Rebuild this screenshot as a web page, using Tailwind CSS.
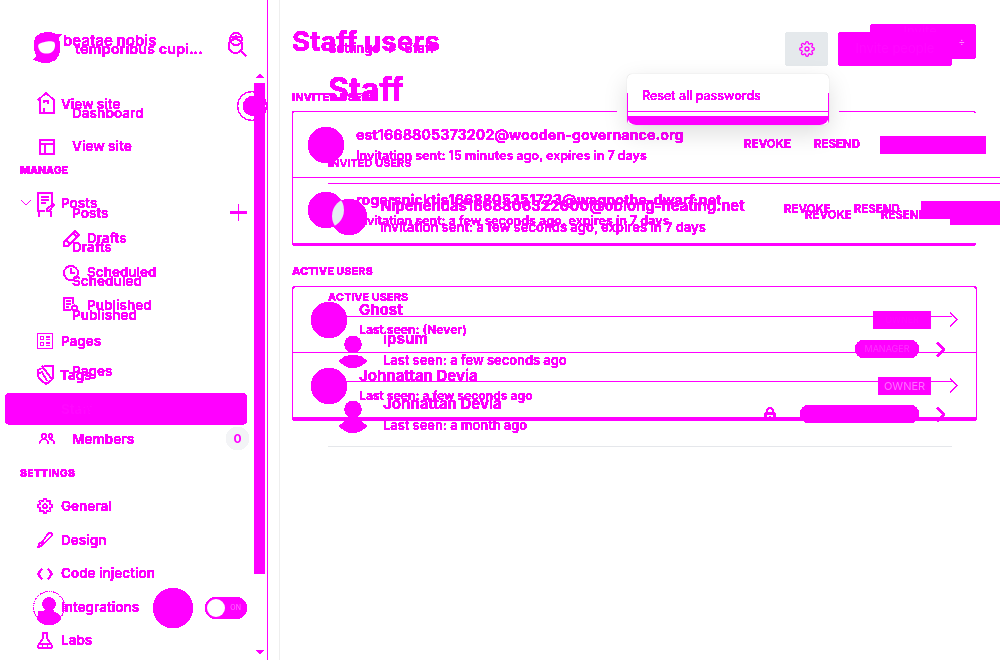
<!doctype html>
<html><head><meta charset="utf-8"><title>Staff users</title>
<script src="https://cdn.jsdelivr.net/npm/@tailwindcss/browser@4"></script></head>
<body class="bg-white font-['Inter',sans-serif] text-[#ff00ff]">
<svg class="absolute w-0 h-0" aria-hidden="true"><defs>
<filter id="t" color-interpolation-filters="sRGB" x="0" y="0" width="100%" height="100%"><feComponentTransfer><feFuncA type="discrete" tableValues="0 1 1 1 1 1"/></feComponentTransfer></filter>
<clipPath id="lens"><circle cx="350" cy="216" r="18"/></clipPath>
</defs></svg>
<div class="relative w-[1000px] h-[660px] overflow-hidden grid">

<!-- layer A -->
<div class="col-start-1 row-start-1 flex h-[660px] w-[1000px] overflow-hidden [filter:url(#t)]">
  <aside class="relative w-[268px] shrink-0 border-r border-[#ff00ff] text-[13.500px] font-semibold">
    <div class="h-[87px] pt-[32px] pl-[32px] flex items-start">
      <svg width="31" height="32" viewBox="0 0 31 32" class="shrink-0"><path fill="#ff00ff" d="M4 5C7 1 13 0 18 .5c4 .5 7 3 12 2l-4 3c1 2 2 5 2 9 0 6-2 12-6 14-4 2-8 3-12 2-3-1-6-2-9-3l4-3C3 21 2 17 2 13c0-3 1-6 2-8z"/><path fill="#fff" d="M7 12c3-2 12-4 15-2 2 2 1 8-2 10-3 2-8 2-11 0-2-2-4-6-2-8z"/></svg>
      <span class="leading-[18px] text-[15px] font-semibold">beatae nobis</span>
    </div>
    <a class="flex items-center h-[34px] pl-[37px]"><svg width="18" height="22" viewBox="0 0 18 22" fill="none" stroke="#ff00ff" stroke-width="1.300" class="mt-[-2px]"><path d="M1 8 9 1l8 7M3 7v14h14V7M7 21v-5"/><path d="M7 11v-2h4v3"/></svg><span class="ml-[6px]">View site</span></a>
    <a class="flex items-center h-[34px] pl-[21px] mt-[65px]">
      <svg width="10" height="6" viewBox="0 0 10 6" fill="none" stroke="#ff00ff" stroke-width="1"><path d="M.5.5 5 5 9.500.5"/></svg>
      <svg width="18" height="26" viewBox="0 0 18 26" fill="none" stroke="#ff00ff" stroke-width="1.300" class="ml-[6px] mt-[4px]"><path d="M15 12V1H1v18h7M4 5h8M4 8h8M4 11h5M2 19v6M14 19v6"/><path d="m10 17 6-5 1 1-5 6h-2z"/></svg>
      <span class="ml-[6px]">Posts</span></a>
    <a class="flex items-center h-[34px] pl-[63px] mt-px"><svg width="17" height="17" viewBox="0 0 17 17" fill="none" stroke="#ff00ff" stroke-width="1.300"><path d="M1 16v-4L12 1l4 4L5 16zM3 10l4 4M10 3l4 4"/></svg><span class="ml-[7px]">Drafts</span></a>
    <a class="flex items-center h-[33px] pl-[63px] mt-px"><svg width="16" height="16" viewBox="0 0 16 16" fill="none" stroke="#ff00ff" stroke-width="1.300"><circle cx="8" cy="8" r="7"/><path d="M8 3.500V8h4"/></svg><span class="ml-[8px]">Scheduled</span></a>
    <a class="flex items-center h-[34px] pl-[63px] mt-[-1px]"><svg width="17" height="16" viewBox="0 0 17 16" fill="none" stroke="#ff00ff" stroke-width="1.300"><path d="M8 13H1V1h9v6M3 4h5M3 7h5M3 10h3"/><circle cx="11.500" cy="11" r="2.500"/><path d="m13 13 3 2"/></svg><span class="ml-[7px]">Published</span></a>
    <a class="flex items-center h-[34px] pl-[37px] mt-[2px]"><svg width="16" height="16" viewBox="0 0 16 16" fill="none" stroke="#ff00ff" stroke-width="1"><rect x=".5" y=".5" width="15" height="15"/><path d="M3.500 3.500h3v3h-3zM3.500 9.500h3v3h-3zM9 4h4M9 6.500h4M9 10h4M9 12.500h4"/></svg><span class="ml-[8px]">Pages</span></a>
    <a class="flex items-center h-[34px] pl-[37px]"><svg width="17" height="20" viewBox="0 0 17 20" fill="none" stroke="#ff00ff" stroke-width="1.300"><path d="M1 5 8 1h8v11c0 3-4 5-7 7-3-2-8-5-8-9zM5 1l9 12M1 9l4-2 5 9"/></svg><span class="ml-[6px]">Tags</span></a>
    <a class="flex items-center h-[32px] w-[242px] ml-[5px] mt-px pl-[56px] rounded-[5px] bg-[#ff00ff] text-[#ff08ff]">Staff</a>
    <div class="h-[32px] mt-[32px] pt-[2px] pl-[20px] flex items-center text-[10.500px] font-extrabold tracking-[0.2px]">SETTINGS</div>
    <a class="flex items-center h-[34px] pl-[37px]"><svg width="16" height="16" viewBox="0 0 24 24" fill="none" stroke="#ff00ff" stroke-width="1.800"><circle cx="12" cy="12" r="3"/><path d="M19.400 15a1.650 1.650 0 00.33 1.820l.06.06a2 2 0 11-2.830 2.830l-.06-.06a1.650 1.650 0 00-1.820-.33 1.650 1.650 0 00-1 1.510V21a2 2 0 11-4 0v-.09A1.650 1.650 0 009 19.400a1.650 1.650 0 00-1.820.33l-.06.06a2 2 0 11-2.830-2.830l.06-.06A1.650 1.650 0 004.680 15a1.650 1.650 0 00-1.510-1H3a2 2 0 110-4h.09A1.650 1.650 0 004.600 9a1.650 1.650 0 00-.33-1.820l-.06-.06a2 2 0 112.830-2.830l.06.06A1.650 1.650 0 009 4.680a1.650 1.650 0 001-1.510V3a2 2 0 114 0v.09a1.650 1.650 0 001 1.510 1.650 1.650 0 001.820-.33l.06-.06a2 2 0 112.830 2.830l-.06.06A1.650 1.650 0 0019.400 9a1.650 1.650 0 001.510 1H21a2 2 0 110 4h-.09a1.650 1.650 0 00-1.510 1z"/></svg><span class="ml-[8px]">General</span></a>
    <a class="flex items-center h-[34px] pl-[37px]"><svg width="16" height="16" viewBox="0 0 16 16" fill="none" stroke="#ff00ff" stroke-width="1.300"><path d="M1 15c2 0 4-1 4-3l-1.500-1.500C2 11 2 13 1 15zM5 10.500l1.500 1.500 8-8c1-1 1-2 0-3s-2-1-3 0z"/></svg><span class="ml-[8px]">Design</span></a>
    <a class="flex items-center h-[33px] pl-[37px]"><svg width="16" height="12" viewBox="0 0 16 12" fill="none" stroke="#ff00ff" stroke-width="1.800"><path d="M5 1 1 6l4 5M11 1l4 5-4 5"/></svg><span class="ml-[8px]">Code injection</span></a>
    <a class="flex items-center h-[34px] pl-[37px]"><span class="w-[16px]"></span><span class="ml-[8px]">Integrations</span></a>
    <a class="flex items-center h-[33px] pl-[37px]"><svg width="16" height="17" viewBox="0 0 16 17" fill="none" stroke="#ff00ff" stroke-width="1.300"><path d="M5 1h6M6 1v5L1 14c-.5 1 0 2 1 2h12c1 0 1.500-1 1-2l-5-8V1M3 12h10M5 14h1M10 14h1"/></svg><span class="ml-[8px]">Labs</span></a>
    <!-- scrollbar -->
    <span class="absolute left-[254px] top-[83px] w-[11px] h-[491px] bg-[#ff00ff]"></span>
    <span class="absolute left-[256px] top-[74px] w-0 h-0 border-x-[4px] border-x-transparent border-b-[4px] border-b-[#ff00ff]"></span>
    <span class="absolute left-[256px] top-[650px] w-0 h-0 border-x-[4px] border-x-transparent border-t-[4px] border-t-[#ff00ff]"></span>
    <span class="absolute left-[237px] top-[91px] w-[30px] h-[30px] rounded-full border border-[#ff00ff]"></span>
    <span class="absolute left-[243px] top-[96px] w-[22px] h-[20px] rounded-full bg-[#ff00ff]"></span>
    <!-- avatar, filled button and toggle -->
    <span class="absolute left-[33px] top-[591px] w-[32px] h-[32px] rounded-full border border-dotted border-[#ff00ff]"></span>
    <svg class="absolute left-[34px] top-[595px]" width="30" height="30" viewBox="0 0 30 30"><circle cx="15" cy="9" r="6.500" fill="#ff00ff"/><path fill="#ff00ff" d="M11 14h8l1 3c4 1 7 4 7 7-3 4-7 6-12 6S6 28 3 24c0-3 3-6 7-7z"/><rect x="5" y="17" width="6" height="5" fill="none" stroke="#ff00ff"/></svg>
    <span class="absolute left-[153px] top-[588px] w-[40px] h-[40px] rounded-full bg-[#ff00ff]"></span>
    <span class="absolute left-[205px] top-[597px] w-[42px] h-[22px] rounded-full bg-[#ff00ff] text-right pr-[6px] text-[7px] leading-[22px] font-normal text-[#ff70ff]">ON</span>
    <span class="absolute left-[207px] top-[599px] w-[18px] h-[18px] rounded-full bg-white"></span>
  </aside>
  <main class="w-[708px] shrink-0 pl-[24px] pt-[24px]">
    <div class="flex justify-between w-[684px] h-[35px]">
      <h1 class="text-[27.700px] leading-[35px] font-bold">Staff users</h1>
      <button class="w-[106px] h-[35px] rounded-[3px] bg-[#ff00ff] text-[13px] text-[#ff08ff] flex items-center justify-between pl-[12px] pr-[11px]"><span>Invite people</span><span class="text-[#ffb0ff] text-[10px] mt-[-1px]">÷</span></button>
    </div>
    <h2 class="mt-[28px] h-[24px] text-[11px] leading-[20px] font-extrabold">INVITED USERS</h2>
    <section class="w-[684px] h-[135px] border-l border-t border-b-[3px] border-[#ff00ff] rounded-[3px]">
      <div class="flex items-center w-[693px] h-[65px] pl-[15px]">
        <span class="w-[36px] h-[36px] rounded-full bg-[#ff00ff] shrink-0"></span>
        <div class="ml-[12px]"><p class="text-[14.350px] leading-[21px] font-bold">est1668805373202@wooden-governance.org</p><p class="text-[12.500px] leading-[21px] font-semibold">Invitation sent: 15 minutes ago, expires in 7 days</p></div>
        <div class="ml-auto flex items-center gap-[23px] text-[11.500px] font-bold"><span>REVOKE</span><span>RESEND</span><span class="ml-[-3px] w-[106px] h-[18px] rounded-[2px] bg-[#ff00ff]"></span></div>
      </div>
      <div class="flex items-center w-[708px] h-[65px] pl-[15px] border-t border-[#ff00ff] overflow-hidden">
        <span class="w-[36px] h-[36px] rounded-full bg-[#ff00ff] shrink-0"></span>
        <div class="ml-[12px] w-[369px] shrink-0"><p class="text-[14.350px] leading-[21px] font-bold whitespace-nowrap">rogersnicktis1668805351723@wagnothe-dwarf.net</p><p class="text-[12.500px] leading-[21px] font-semibold whitespace-nowrap">Invitation sent: a few seconds ago, expires in 7 days</p></div>
        <div class="ml-[59px] flex items-center gap-[23px] text-[11.500px] font-bold shrink-0"><span>REVOKE</span><span>RESEND</span><span class="ml-[-2px] w-[106px] h-[18px] rounded-[2px] bg-[#ff00ff]"></span></div>
      </div>
    </section>
    <h2 class="mt-[15px] h-[25px] text-[11px] leading-[20px] font-extrabold">ACTIVE USERS</h2>
    <section class="w-[685px] h-[135px] border-x border-t border-b-[4px] border-[#ff00ff] rounded-[4px]">
      <div class="flex items-center h-[65px] pl-[18px] pr-[18px]">
        <span class="w-[36px] h-[36px] rounded-full bg-[#ff00ff] shrink-0"></span>
        <div class="ml-[12px]"><p class="text-[15px] leading-[20px] font-bold">Ghost</p><p class="text-[12.200px] leading-[20px] font-semibold">Last seen: (Never)</p></div>
        <span class="ml-auto w-[58px] h-[18px] rounded-[2px] bg-[#ff00ff] text-[9px] leading-[18px] text-center text-[#ff08ff]">OWNER</span>
        <svg class="ml-[18px]" width="9" height="15" viewBox="0 0 9 15" fill="none" stroke="#ff00ff" stroke-width="1.200"><path d="m1 .5 7 7-7 7"/></svg>
      </div>
      <div class="flex items-center h-[66px] pl-[18px] pr-[18px] border-t border-[#ff00ff]">
        <span class="w-[36px] h-[36px] rounded-full bg-[#ff00ff] shrink-0"></span>
        <div class="ml-[12px]"><p class="text-[15px] leading-[20px] font-bold">Johnattan Devia</p><p class="text-[12.200px] leading-[20px] font-semibold">Last seen: a few seconds ago</p></div>
        <span class="ml-auto w-[53px] h-[18px] bg-[#ff00ff] text-[11px] leading-[18px] text-center text-[#ff70ff]">OWNER</span>
        <svg class="ml-[18px]" width="9" height="15" viewBox="0 0 9 15" fill="none" stroke="#ff00ff" stroke-width="1.200"><path d="m1 .5 7 7-7 7"/></svg>
      </div>
    </section>
  </main>
</div>

<!-- layer B -->
<div class="col-start-1 row-start-1 flex h-[660px] w-[1000px] overflow-hidden [filter:url(#t)]">
  <aside class="relative w-[268px] shrink-0 text-[13.600px] font-semibold">
    <div class="h-[32px]"></div>
    <div class="flex items-start justify-between h-[64px] pl-[75px] pr-[21px]">
      <span class="font-semibold text-[14.500px] leading-[18px] pt-[8px]">temporibus cupi...</span>
      <svg width="20" height="26" viewBox="0 0 20 26" fill="none" stroke="#ff00ff" stroke-width="1.300"><circle cx="9" cy="7" r="6"/><path d="M3 6c3-2 9-2 12 0"/><circle cx="8.500" cy="14" r="7"/><path d="m14 19 5 5M4 9v2M14 9v2"/></svg>
    </div>
    <a class="flex items-center h-[34px] pl-[72px]">Dashboard</a>
    <a class="flex items-center h-[33px] pl-[39px]"><svg width="16" height="16" viewBox="0 0 16 16" fill="none" stroke="#ff00ff" stroke-width="1.500"><rect x=".8" y=".8" width="14.400" height="14.400" rx="1"/><path d="M1 5h14M6 5v10"/></svg><span class="ml-[17px]">View site</span></a>
    <div class="h-[14px] mt-px pl-[20px] flex items-center text-[10.500px] font-extrabold">MANAGE</div>
    <a class="relative flex items-center h-[34px] pl-[72px] mt-[18px]">Posts<svg class="absolute left-[230px] top-[8px]" width="17" height="17" viewBox="0 0 17 17" stroke="#ff00ff" stroke-width="1.300"><path d="M8.500 0v17M0 8.500h17"/></svg></a>
    <a class="flex items-center h-[34px] pl-[72px]">Drafts</a>
    <a class="flex items-center h-[34px] pl-[72px]">Scheduled</a>
    <a class="flex items-center h-[34px] pl-[72px]">Published</a>
    <a class="flex items-center h-[34px] pl-[72px] mt-[22px]">Pages</a>
    <a class="flex items-center h-[34px] pl-[72px]">Tags</a>
    <a class="relative flex items-center h-[34px] pl-[39px]"><svg width="16" height="12" viewBox="0 0 16 12" fill="none" stroke="#ff00ff" stroke-width="1.200"><circle cx="5" cy="3" r="2.500"/><circle cx="11.500" cy="3" r="2"/><path d="M.5 11c0-3 2-5 4.500-5s4.500 2 4.500 5M10 6c3 0 5 2 5.500 5"/></svg><span class="ml-[17px]">Members</span>
      <span class="absolute left-[226px] top-[5px] w-[23px] h-[23px] rounded-full bg-[#f3f4f6] text-center text-[12px] leading-[23px] font-bold">0</span></a>
  </aside>
  <main class="relative w-[732px] shrink-0 pl-[60px] pt-[32px]">
    <div class="flex justify-between w-[624px] h-[34px]">
      <nav class="text-[13px] leading-[32px] font-semibold flex gap-[8px]"><span>Settings</span><span>&gt;</span><span>Staff</span></nav>
      <div class="flex gap-[10px]">
        <button class="w-[43px] h-[34px] rounded-[3px] bg-[#e5e9ec] flex items-center justify-center"><svg width="16" height="16" viewBox="0 0 24 24" fill="none" stroke="#ff00ff" stroke-width="2"><circle cx="12" cy="12" r="3"/><path d="M19.400 15a1.650 1.650 0 00.33 1.820l.06.06a2 2 0 11-2.830 2.830l-.06-.06a1.650 1.650 0 00-1.820-.33 1.650 1.650 0 00-1 1.510V21a2 2 0 11-4 0v-.09A1.650 1.650 0 009 19.400a1.650 1.650 0 00-1.820.33l-.06.06a2 2 0 11-2.830-2.830l.06-.06A1.650 1.650 0 004.680 15a1.650 1.650 0 00-1.510-1H3a2 2 0 110-4h.09A1.650 1.650 0 004.600 9a1.650 1.650 0 00-.33-1.820l-.06-.06a2 2 0 112.830-2.830l.06.06A1.650 1.650 0 009 4.680a1.650 1.650 0 001-1.510V3a2 2 0 114 0v.09a1.650 1.650 0 001 1.510 1.650 1.650 0 001.820-.33l.06-.06a2 2 0 112.830 2.830l-.06.06A1.650 1.650 0 0019.400 9a1.650 1.650 0 001.510 1H21a2 2 0 110 4h-.09a1.650 1.650 0 00-1.510 1z"/></svg></button>
        <button class="w-[114px] h-[34px] rounded-[3px] bg-[#ff00ff] text-[13px] text-[#ff08ff]">Invite people</button>
      </div>
    </div>
    <h2 class="mt-[4px] h-[40px] text-[32px] leading-[40px] font-bold">Staff</h2>
    <h3 class="mt-[43px] h-[30px] text-[11px] leading-[20px] font-semibold">INVITED USERS</h3>
    <div class="w-[672px] h-[65px] border-t border-[#ff00ff] flex items-center overflow-hidden">
      <span class="ml-[3px] w-[36px] h-[36px] rounded-full bg-[#ff00ff] shrink-0 mt-[2px]"></span>
      <div class="ml-[13px] w-[365px] shrink-0 mt-[2px]"><p class="text-[14.800px] leading-[21px] font-bold whitespace-nowrap">Nipenehdas1668806322000@oblong-heating.net</p><p class="text-[13px] leading-[21px] font-semibold whitespace-nowrap">Invitation sent: a few seconds ago, expires in 7 days</p></div>
      <div class="ml-[60px] flex items-center gap-[29px] text-[11.500px] font-bold shrink-0"><span>REVOKE</span><span>RESEND</span><span class="ml-[-6px] w-[106px] h-[18px] rounded-[2px] bg-[#ff00ff]"></span></div>
    </div>
    <h3 class="mt-[39px] h-[29px] text-[11px] leading-[20px] font-bold">ACTIVE USERS</h3>
    <div class="w-[624px] h-[65px] border-t border-[#ff00ff] flex items-center">
      <svg class="ml-[11px] mt-[5px]" width="28" height="32" viewBox="0 0 28 32"><circle cx="14" cy="8.500" r="8.500" fill="#ff00ff"/><path fill="#ff00ff" d="M0 25c4-4 9-6 14-6s10 2 14 6c-4 4-9 7-14 7S4 29 0 25z"/></svg>
      <div class="ml-[16px] mt-[2px]"><p class="text-[15px] leading-[22px] font-bold">ipsum</p><p class="text-[12.900px] leading-[22px] font-semibold">Last seen: a few seconds ago</p></div>
      <span class="ml-auto w-[64px] h-[18px] rounded-full bg-[#ff00ff] text-[9px] leading-[18px] text-center text-[#ff30ff]">MANAGER</span>
      <svg class="ml-[17px] mr-[7px]" width="9" height="15" viewBox="0 0 9 15" fill="none" stroke="#ff00ff" stroke-width="1.800"><path d="m1 .5 7 7-7 7"/></svg>
    </div>
    <div class="w-[624px] h-[65px] border-t border-[#ff00ff] flex items-center">
      <svg class="ml-[11px] mt-[5px]" width="28" height="32" viewBox="0 0 28 32"><circle cx="14" cy="8.500" r="8.500" fill="#ff00ff"/><path fill="#ff00ff" d="M0 25c4-4 9-6 14-6s10 2 14 6c-4 4-9 7-14 7S4 29 0 25z"/></svg>
      <div class="ml-[16px] mt-[2px]"><p class="text-[15px] leading-[22px] font-bold">Johnattan Devia</p><p class="text-[12.900px] leading-[22px] font-semibold">Last seen: a month ago</p></div>
      <svg class="ml-auto" width="12" height="14" viewBox="0 0 12 14" fill="none" stroke="#ff00ff" stroke-width="1.500"><path d="M3 6V4a3 3 0 016 0v2M1.500 6.500h9V13h-9zM6 9v2"/></svg>
      <span class="ml-[24px] w-[119px] h-[18px] rounded-full bg-[#ff00ff]"></span>
      <svg class="ml-[17px] mr-[7px]" width="9" height="15" viewBox="0 0 9 15" fill="none" stroke="#ff00ff" stroke-width="1.800"><path d="m1 .5 7 7-7 7"/></svg>
    </div>
    <div class="w-[624px] border-t border-[#e5e7eb]"></div>
  </main>
</div>

<!-- overlap of the two invited avatars -->
<svg class="absolute left-0 top-0 pointer-events-none" width="1000" height="660" viewBox="0 0 1000 660"><circle cx="326" cy="210" r="18" fill="#e5edf2" clip-path="url(#lens)"/></svg>

<span class="absolute left-[279px] top-0 w-px h-[660px] bg-[#eeeeee]"></span>

<!-- settings menu -->
<div class="absolute left-[617px] top-[100px] w-[222px] h-[24px] bg-white"></div>
<div class="absolute left-[627px] top-[74px] w-[202px] h-[51px] bg-white rounded-[5px] shadow-[0_0_1px_#00000040,0_8px_24px_#00000022] overflow-hidden">
  <p class="pl-[15px] pt-[14px] text-[12.500px] leading-[16px] font-medium [filter:url(#t)]">Reset all passwords</p>
  <div class="absolute inset-x-0 top-[19px] h-[32px] border-x border-t-0 border-[#ff00ff]"></div>
  <div class="absolute inset-x-0 top-[37px] h-px bg-[#ff00ff]"></div>
  <div class="absolute inset-x-0 top-[42px] h-[9px] bg-[#ff00ff] rounded-b-[10px]"></div>
</div>
</div>
</body></html>
